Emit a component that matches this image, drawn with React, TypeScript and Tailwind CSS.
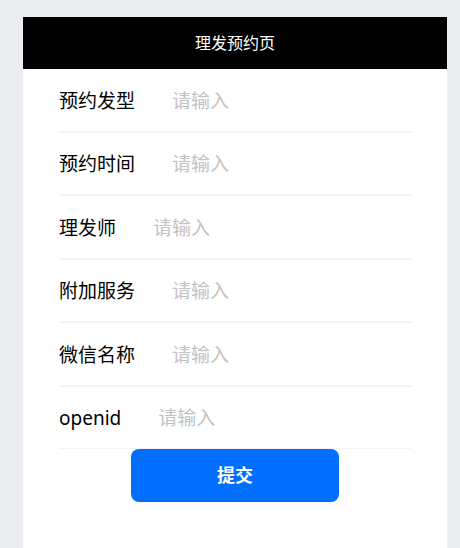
import React from 'react';

const fields = ['预约发型', '预约时间', '理发师', '附加服务', '微信名称', 'openid'];

export default function App() {
  return (
    <div
      className="min-h-[548px] bg-[#ebedf0] pt-[17px] px-[23px] pr-[13px]"
      style={{ fontFamily: '"Noto Sans", "Noto Sans CJK SC", sans-serif' }}
    >
      <div className="w-[424px] min-h-[531px] bg-white">
        <div className="h-[52px] bg-black flex items-center justify-center text-white text-[16px]">
          理发预约页
        </div>

        <div className="px-[36px]">
          {fields.map((label, i) => (
            <div key={label}>
              <div className="h-[61.5px] pt-[2px] flex items-center text-[19px]">
                <span className="text-black whitespace-nowrap">{label}</span>
                <input
                  className="ml-[37px] flex-1 min-w-0 outline-none bg-transparent placeholder:text-[#c2c2c2] text-[19px]"
                  placeholder="请输入"
                />
              </div>
              <div className={i === fields.length - 1 ? 'h-px bg-[#f3f3f3]' : 'h-[2px] bg-[#f2f3f5]'} />
            </div>
          ))}
        </div>

        <div className="flex justify-center">
          <button className="w-[208px] h-[53px] rounded-[8px] bg-[#006fff] text-white text-[18px] font-bold">
            提交
          </button>
        </div>
      </div>
    </div>
  );
}
